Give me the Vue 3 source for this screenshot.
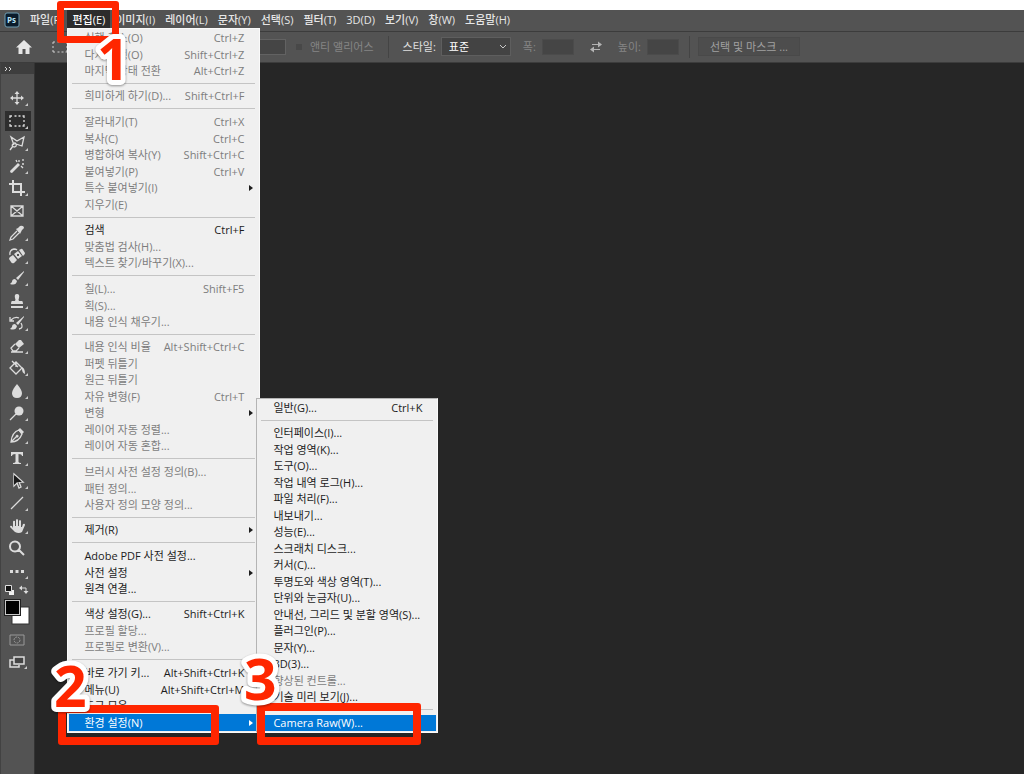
<script setup>
import {ref} from "vue";

const menuBar = ['파일(F)', '편집(E)', '이미지(I)', '레이어(L)', '문자(Y)', '선택(S)', '필터(T)', '3D(D)', '보기(V)', '창(W)', '도움말(H)'];
const openMenu = '편집(E)';
const styleMode = ref('표준');
const activeTool = ref('선택 윤곽');

const off = (label, keys = '', arrow = false) => ({label, keys, arrow, disabled: true});
const on = (label, keys = '', arrow = false) => ({label, keys, arrow, disabled: false});

const editMenu = [
  [off('실행 취소(O)', 'Ctrl+Z'), off('다시 실행(O)', 'Shift+Ctrl+Z'), off('마지막 상태 전환', 'Alt+Ctrl+Z')],
  [off('희미하게 하기(D)...', 'Shift+Ctrl+F')],
  [
    off('잘라내기(T)', 'Ctrl+X'),
    off('복사(C)', 'Ctrl+C'),
    off('병합하여 복사(Y)', 'Shift+Ctrl+C'),
    off('붙여넣기(P)', 'Ctrl+V'),
    off('특수 붙여넣기(I)', '', true),
    off('지우기(E)'),
  ],
  [on('검색', 'Ctrl+F'), off('맞춤법 검사(H)...'), off('텍스트 찾기/바꾸기(X)...')],
  [off('칠(L)...', 'Shift+F5'), off('획(S)...'), off('내용 인식 채우기...')],
  [
    off('내용 인식 비율', 'Alt+Shift+Ctrl+C'),
    off('퍼펫 뒤틀기'),
    off('원근 뒤틀기'),
    off('자유 변형(F)', 'Ctrl+T'),
    off('변형', '', true),
    off('레이어 자동 정렬...'),
    off('레이어 자동 혼합...'),
  ],
  [off('브러시 사전 설정 정의(B)...'), off('패턴 정의...'), off('사용자 정의 모양 정의...')],
  [on('제거(R)', '', true)],
  [on('Adobe PDF 사전 설정...'), on('사전 설정', '', true), on('원격 연결...')],
  [on('색상 설정(G)...', 'Shift+Ctrl+K'), off('프로필 할당...'), off('프로필로 변환(V)...')],
  [
    on('바로 가기 키...', 'Alt+Shift+Ctrl+K'),
    on('메뉴(U)', 'Alt+Shift+Ctrl+M'),
    on('도구 모음...'),
    {...on('환경 설정(N)', '', true), selected: true},
  ],
];

const preferencesMenu = [
  [on('일반(G)...', 'Ctrl+K')],
  [
    on('인터페이스(I)...'),
    on('작업 영역(K)...'),
    on('도구(O)...'),
    on('작업 내역 로그(H)...'),
    on('파일 처리(F)...'),
    on('내보내기...'),
    on('성능(E)...'),
    on('스크래치 디스크...'),
    on('커서(C)...'),
    on('투명도와 색상 영역(T)...'),
    on('단위와 눈금자(U)...'),
    on('안내선, 그리드 및 분할 영역(S)...'),
    on('플러그인(P)...'),
    on('문자(Y)...'),
    on('3D(3)...'),
    off('향상된 컨트롤...'),
    on('기술 미리 보기(J)...'),
  ],
  [{...on('Camera Raw(W)...'), selected: true}],
];

// line = stroked path, fill = solid path, both on a 20x20 grid
const tools = [
  {name: '이동', line: 'M10 5V15M5 10H15', fill: 'M10 3L12.5 6H7.5ZM10 17L7.5 14H12.5ZM3 10L6 7.5V12.5ZM17 10L14 12.5V7.5Z'},
  {name: '선택 윤곽', line: 'M3 7V5H5M7.5 5H9.5M11.5 5H13.5M15.5 5H17V7M17 9V11M17 13V15H15.5M13.5 15H11.5M9.5 15H7.5M5 15H3V13M3 11V9'},
  {name: '올가미', line: 'M7 12L4 4L10 8L17 4L15 13L9 11M9 11Q8 9 6 11Q4 13 7 14Q10 14 9 11M6 13L3 17'},
  {name: '마술봉', line: 'M12 4V6M16 3V5M17 8H15M9 4L10 6M14 10L16 12', fill: 'M3 15L11 7L13 9L5 17Q3 17 3 15Z'},
  {name: '자르기', line: 'M6 2V14H18M2 6H14V18', bold: true},
  {name: '프레임', line: 'M4 5H16V15H4ZM4 5L16 15M16 5L4 15', noMore: true},
  {name: '스포이드', line: 'M10 8L4 14L3 17L6 16L12 10', fill: 'M9 6L11 5L13 3Q15 2 17 4Q17 6 15 7L14 9L13 11Z'},
  {name: '복구 브러시', line: 'M3 9Q2 4 7 3Q9 3 10 4', fill: 'M3 11L6 9L10 14L7 17Q5 18 4 16L2 13Q2 12 3 11ZM7 8L11 5L15 10L11 13ZM12 4L14 3Q15 2 16 4L18 7Q18 8 17 9L16 10ZM10 8V10H12V8Z'},
  {name: '브러시', fill: 'M17 3L9 10L11 12L17 4ZM8 11Q5 11 5 14L3 16Q9 18 10 13Z'},
  {name: '도장', fill: 'M8 10Q9 9 8 7Q7 3 10 3Q13 3 12 7Q11 9 12 10H15Q16 10 16 13H4Q4 10 5 10ZM4 15H16V17H4Z'},
  {name: '작업 내역 브러시', line: 'M3 4V8H7M4 7Q8 3 12 5M14 10Q17 15 12 16', fill: 'M17 3L9 10L11 12L17 4ZM8 11Q5 11 5 14L3 16Q9 18 10 13Z'},
  {name: '지우개', line: 'M8 8L4 12L6 15H9L12 12M4 16H16', fill: 'M8 8L12 4H14L17 8L12 12Z'},
  {name: '페인트 통', line: 'M3 10L9 4L15 10L9 16ZM5 3L11 9M9 9V4', fill: 'M14 9Q18 9 18 16Q15 15 15 11Z'},
  {name: '흐림 효과', fill: 'M10 3Q5 9 5 12Q5 17 10 17Q15 17 15 12Q15 9 10 3Z'},
  {name: '닷지', line: 'M9 11L3 17', fill: 'M16.5 8A4.5 4.5 0 1 1 7.5 8A4.5 4.5 0 1 1 16.5 8Z'},
  {name: '펜', line: 'M12 4Q5 6 4 16Q12 16 15 8ZM4 16L10 10', fill: 'M11 4L13 2L17 6L15 8ZM10 8.5L12 10L10 12L8.5 10Z'},
  {name: '문자', fill: 'M4 4H16V8H15Q15 6 11.5 6V14Q12 15 14 15V16H6V15Q8 15 8.5 14V6Q5 6 5 8H4Z'},
  {name: '패스 선택', line: 'M7 3V15L10 12L12 17L14 16L12 11H16Z', dark: 'M7 4V14L10 11H15Z'},
  {name: '선', line: 'M4 16L16 4'},
  {name: '손', fill: 'M6 12V6Q6 4 8 5V10H9V4Q10 2 11 4V10H12V5Q13 3 14 5V11H15L16 8Q18 7 18 9L15 16Q12 18 8 16L3 11Q3 9 5 10Z'},
  {name: '돋보기', line: 'M13 8.5A5 5 0 1 1 3 8.5A5 5 0 1 1 13 8.5ZM12 12L17 17', bold: true, noMore: true},
  {name: '도구 모음 편집', fill: 'M3 9H6V12H3ZM8.5 9H11.5V12H8.5ZM14 9H17V12H14Z'},
];
</script>

<template>
  <div class="app">
    <header class="menu-bar">
      <svg class="logo" viewBox="0 0 16 16">
        <rect x="1" y="1" width="14" height="14" rx="2" fill="#0b1c2b" stroke="#6f9db3"/>
        <text x="3" y="11" class="logo-text">Ps</text>
      </svg>
      <nav class="menu-list">
        <div v-for="name in menuBar" :key="name" class="menu-holder">
          <button class="menu-name" :class="{open: name === openMenu}">{{ name }}</button>
          <div v-if="name === openMenu" class="menu edit-menu">
            <ul v-for="(group, g) in editMenu" :key="g" class="group">
              <li v-for="item in group" :key="item.label">
                <button class="item" :class="{selected: item.selected}" :disabled="item.disabled">
                  <span>{{ item.label }}</span>
                  <span>{{ item.keys }}</span>
                  <i v-if="item.arrow" class="arrow"></i>
                </button>
              </li>
            </ul>
            <div class="menu sub-menu">
              <ul v-for="(group, g) in preferencesMenu" :key="g" class="group">
                <li v-for="item in group" :key="item.label">
                  <button class="item" :class="{selected: item.selected}" :disabled="item.disabled">
                    <span>{{ item.label }}</span>
                    <span>{{ item.keys }}</span>
                  </button>
                </li>
              </ul>
            </div>
          </div>
        </div>
      </nav>
    </header>

    <div class="options">
      <button class="home" aria-label="홈">
        <svg viewBox="0 0 16 16"><path d="M8 1L0 8.5H2.5V15H6.5V10H9.5V15H13.5V8.5H16Z" fill="#e6e6e6"/></svg>
      </button>
      <svg class="preset" viewBox="0 0 20 20"><path :d="tools[1].line"/></svg>
      <input class="field feather" aria-label="페더" disabled>
      <label class="check"><input type="checkbox" disabled>앤티 앨리어스</label>
      <span class="divider"></span>
      <label class="style-label" for="style-mode">스타일:</label>
      <div class="select-box">
        <select id="style-mode" v-model="styleMode">
          <option>표준</option>
          <option>고정비</option>
          <option>크기 고정</option>
        </select>
        <svg viewBox="0 0 8 6"><path d="M1 1L4 4L7 1" fill="none" stroke="#c8c8c8"/></svg>
      </div>
      <label class="size-field">폭:<input class="field" disabled></label>
      <button class="swap" aria-label="폭과 높이 바꾸기">
        <svg viewBox="0 0 12 12"><path d="M2 3.5H9M10 8.5H3" stroke="#b4b4b4"/><path d="M8 0.5L12 3.5L8 6.5ZM4 5.5V11.5L0 8.5Z" fill="#b4b4b4"/></svg>
      </button>
      <label class="size-field">높이:<input class="field" disabled></label>
      <span class="divider last"></span>
      <button class="mask" disabled>선택 및 마스크 ...</button>
    </div>

    <main class="workspace">
      <aside class="toolbar">
        <button class="expand" aria-label="확장">
          <svg viewBox="0 0 8 6"><path d="M1 1L3 3L1 5M5 1L7 3L5 5" fill="none" stroke="#d8d8d8"/></svg>
        </button>
        <div class="tools">
          <button
            v-for="tool in tools"
            :key="tool.name"
            class="tool"
            :class="{active: tool.name === activeTool}"
            :aria-label="tool.name"
            @click="activeTool = tool.name"
          >
            <svg viewBox="0 0 26 20">
              <g transform="translate(2 0)">
                <path v-if="tool.line" class="line" :class="{bold: tool.bold}" :d="tool.line"/>
                <path v-if="tool.fill" class="solid" :d="tool.fill"/>
                <path v-if="tool.dark" class="dark" :d="tool.dark"/>
              </g>
              <path v-if="!tool.noMore" d="M23 15V18H20Z" fill="#c8c8c8"/>
            </svg>
          </button>
        </div>
        <svg class="swatches" viewBox="0 0 26 42">
          <path d="M5 6H10V11H5Z" fill="#eee"/>
          <path d="M1.5 1.5H7.5V7.5H1.5Z" fill="#111" stroke="#ddd"/>
          <path d="M17 4H22V9" fill="none" stroke="#ddd"/>
          <path d="M18 1.5V6.5L15 4ZM19.5 7H24.5L22 10Z" fill="#ddd"/>
          <rect x="8" y="23" width="17" height="17" fill="#fff" stroke="#333"/>
          <rect x="0" y="15" width="17" height="17" fill="#222"/>
          <rect x="1.5" y="16.5" width="14" height="14" fill="#000" stroke="#c8c8c8"/>
        </svg>
        <button class="mode" aria-label="빠른 마스크">
          <svg viewBox="0 0 20 20"><path d="M3 5H17V15H3Z" fill="none" stroke="#999"/><circle cx="10" cy="10" r="3" fill="none" stroke="#999" stroke-dasharray="2 1"/></svg>
        </button>
        <button class="mode" aria-label="화면 모드">
          <svg viewBox="0 0 20 20"><path d="M7 8H3V15H12V13" fill="none" stroke="#ddd" stroke-width="1.5"/><path d="M7 5H17V12H7Z" fill="#444" stroke="#ddd" stroke-width="1.5"/><path d="M20 14V17H17Z" fill="#ccc"/></svg>
        </button>
      </aside>
      <div class="canvas"></div>
    </main>

    <div class="frame frame-one"></div>
    <div class="frame frame-two"></div>
    <div class="frame frame-three"></div>
    <svg class="step step-one" viewBox="0 0 44 56"><text x="6" y="48">1</text></svg>
    <svg class="step step-two" viewBox="0 0 44 56"><text x="6" y="48">2</text></svg>
    <svg class="step step-three" viewBox="0 0 44 56"><text x="6" y="48">3</text></svg>
  </div>
</template>

<style>
  body {
    margin: 0;
    background: #262626;
  }
</style>

<style scoped>
  .app {
    position: relative;
    display: flex;
    flex-direction: column;
    box-sizing: border-box;
    min-height: 100vh;
    padding-top: 10px;
    background: #fff;
    overflow: hidden;
    font-family: "Open Sans", "Noto Sans CJK KR", sans-serif;
    font-size: 11px;
    line-height: 16px;
    color: #e6e6e6;
  }
  button, input, select {
    box-sizing: border-box;
    margin: 0;
    padding: 0;
    border: 0;
    background: none;
    color: inherit;
    font: inherit;
  }
  svg {
    display: block;
  }
  .menu-bar {
    display: flex;
    height: 21px;
    padding-left: 4px;
    background: #535353;
    border-bottom: 1px solid #3c3c3c;
  }
  .logo {
    width: 16px;
    height: 16px;
    margin: 2px 5px 0 0;
  }
  .logo-text {
    fill: #b9e2f5;
    font-size: 8px;
    font-weight: 700;
  }
  .menu-list {
    display: flex;
  }
  .menu-holder {
    position: relative;
  }
  .menu-name {
    display: block;
    height: 20px;
    padding: 0 5px 1px;
    font-weight: 500;
    white-space: nowrap;
  }
  .menu-name.open {
    background: #2c2c2c;
    color: #fff;
  }
  .menu {
    position: absolute;
    z-index: 2;
    box-sizing: border-box;
    padding: 1px;
    border: 1px solid #fafafa;
    background: #f0f0f0;
    color: #1c1c1c;
  }
  .edit-menu {
    top: 18px;
    left: 0;
    width: 193px;
  }
  .sub-menu {
    left: 188px;
    bottom: -1px;
    width: 182px;
    border-left-color: #b4b4b4;
    border-top-color: #b4b4b4;
  }
  .group {
    margin: 0;
    padding: 0;
    list-style: none;
  }
  .group + .group::before {
    content: "";
    display: block;
    height: 1px;
    margin: 4px 3px 5px;
    background: #c4c4c4;
  }
  .group + .group:nth-child(even)::before {
    margin-bottom: 4px;
  }
  .item {
    display: grid;
    grid-template-columns: 1fr auto 14px;
    align-items: center;
    width: 100%;
    height: 16px;
    padding-left: 15px;
    text-align: left;
    white-space: nowrap;
  }
  li:nth-child(even) .item {
    height: 17px;
  }
  .item:disabled {
    color: #7d7d7d;
  }
  .item.selected {
    background: #0078d7;
    color: #fff;
  }
  .arrow {
    justify-self: center;
    border: 3px solid transparent;
    border-left: 4px solid #1c1c1c;
    border-right: 0;
  }
  .selected .arrow {
    border-left-color: #fff;
  }
  .options {
    display: flex;
    align-items: center;
    box-sizing: border-box;
    height: 31px;
    padding: 0 16px 1px;
    background: #535353;
    border-bottom: 1px solid #3c3c3c;
    white-space: nowrap;
    color: #858585;
  }
  .home {
    width: 16px;
    margin-right: 18px;
  }
  .preset {
    width: 20px;
    height: 20px;
    fill: none;
    stroke: #d0d0d0;
  }
  .field {
    width: 32px;
    height: 16px;
    background: #454545;
    border: 1px solid #4b4b4b;
  }
  .feather {
    width: 36px;
    margin-left: 180px;
    border-color: #626262;
  }
  .check {
    display: flex;
    align-items: center;
    gap: 8px;
    margin-left: 10px;
  }
  .check input {
    appearance: none;
    width: 6px;
    height: 6px;
    background: #484848;
  }
  .divider {
    width: 1px;
    height: 22px;
    margin: 0 14px;
    background: #444;
  }
  .divider.last {
    margin: 0 8px 0 10px;
  }
  .style-label {
    color: #e0e0e0;
  }
  .select-box {
    display: grid;
    align-items: center;
    width: 70px;
    height: 19px;
    margin: 0 12px 0 5px;
    background: #434343;
    border: 1px solid #5e5e5e;
    box-sizing: border-box;
  }
  .select-box select, .select-box svg {
    grid-area: 1 / 1;
  }
  .select-box select {
    appearance: none;
    padding-left: 7px;
    color: #fff;
  }
  .select-box svg {
    justify-self: end;
    width: 8px;
    margin-right: 3px;
    pointer-events: none;
  }
  .size-field {
    display: flex;
    align-items: center;
    gap: 6px;
  }
  .swap {
    width: 12px;
    margin: 0 16px;
  }
  .mask {
    height: 19px;
    padding: 0 11px;
    background: #4d4d4d;
    border: 1px solid #494949;
    color: #a0a0a0;
  }
  .workspace {
    display: flex;
    flex: 1;
  }
  .toolbar {
    display: flex;
    flex-direction: column;
    box-sizing: border-box;
    width: 35px;
    background: #535353;
    border-left: 1px solid #424242;
    border-right: 1px solid #333;
  }
  .expand {
    width: 100%;
    height: 11px;
    padding-left: 3px;
    background: #3e3e3e;
  }
  .expand svg {
    width: 8px;
    height: 6px;
  }
  .tools {
    display: flex;
    flex-direction: column;
    padding: 13px 0 0 4px;
  }
  .tool {
    display: flex;
    align-items: center;
    width: 26px;
    height: 22px;
  }
  .tool:nth-child(even) {
    height: 23px;
  }
  .tool svg {
    width: 26px;
    height: 20px;
  }
  .tool.active svg {
    background: #2e2e2e;
  }
  .line {
    fill: none;
    stroke: #dcdcdc;
    stroke-width: 1.3;
  }
  .line.bold {
    stroke-width: 2;
  }
  .solid {
    fill: #dcdcdc;
    fill-rule: evenodd;
  }
  .dark {
    fill: #1a1a1a;
  }
  .swatches {
    width: 26px;
    height: 42px;
    margin: 2px 0 3px 3px;
  }
  .mode {
    width: 20px;
    height: 22px;
    margin-left: 6px;
  }
  .mode svg {
    width: 20px;
    height: 20px;
  }
  .canvas {
    flex: 1;
    background: #262626;
  }
  .frame {
    position: absolute;
    z-index: 3;
    box-sizing: border-box;
    border: 8px solid #ff2600;
    border-radius: 3px;
    pointer-events: none;
  }
  .frame-one {
    top: 1px;
    left: 57px;
    width: 62px;
    height: 42px;
    border-width: 7px;
  }
  .frame-two {
    top: 705px;
    left: 58px;
    width: 161px;
    height: 40px;
  }
  .frame-three {
    top: 703px;
    left: 257px;
    width: 164px;
    height: 42px;
  }
  .step {
    position: absolute;
    z-index: 4;
    width: 44px;
    height: 56px;
    overflow: visible;
    fill: #ff2600;
    stroke: #fff;
    stroke-width: 10px;
    stroke-linejoin: round;
    paint-order: stroke fill;
    font-size: 57px;
    font-weight: 700;
    filter: drop-shadow(0 1px 1px #0006);
    pointer-events: none;
  }
  .step-one {
    top: 32px;
    left: 91px;
  }
  .step-two {
    top: 659px;
    left: 48px;
  }
  .step-three {
    top: 652px;
    left: 238px;
  }
</style>
